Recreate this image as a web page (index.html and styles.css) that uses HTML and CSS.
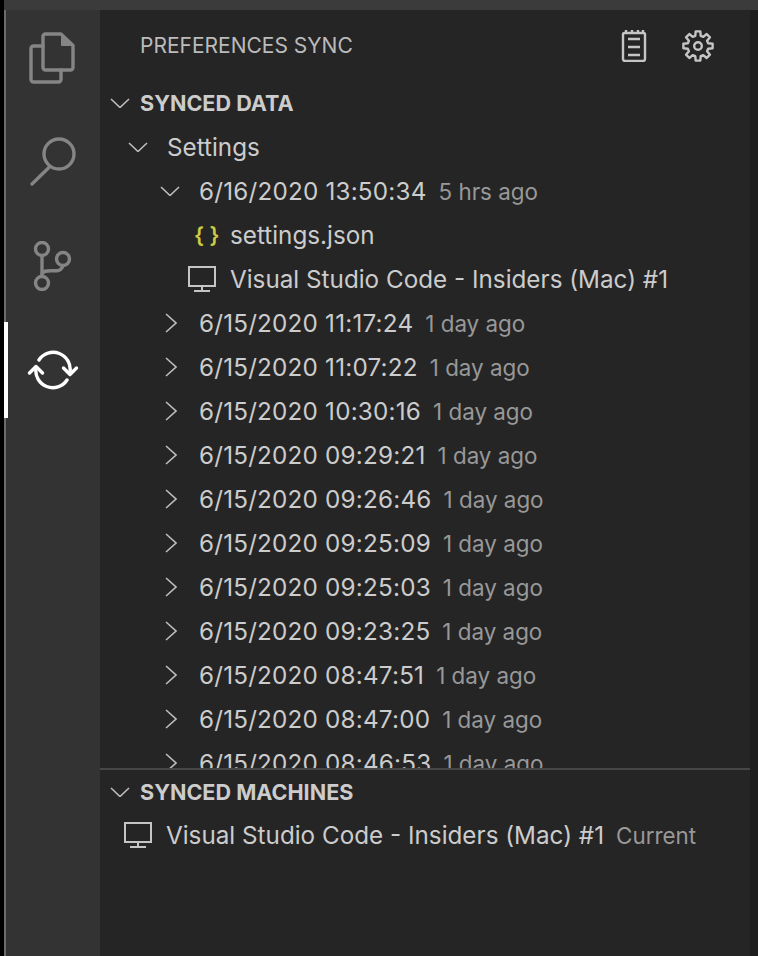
FILE: index.html
```html
<!DOCTYPE html>
<html lang="en">
<head>
    <meta charset="UTF-8">
    <meta name="viewport" content="width=device-width, initial-scale=1.0">
    <title>Preferences Sync</title>
    <link rel="stylesheet" href="styles.css">
</head>
<body>

<div class="title-bar"></div>

<div class="workbench">
    <nav class="activity-bar">
        <div class="activity-item">
            <svg class="activity-icon" viewBox="0 0 48 56" width="48" height="56">
                <path d="M14 16H4.500A2.500 2.500 0 0 0 2 18.500V49.500A2.500 2.500 0 0 0 4.500 52H29.500A2.500 2.500 0 0 0 32 49.500V40"/>
                <path d="M16.500 4H32L44 15.500V37.500A2.500 2.500 0 0 1 41.500 40H16.500A2.500 2.500 0 0 1 14 37.500V6.500A2.500 2.500 0 0 1 16.500 4Z"/>
                <path class="fold" d="M32.500 4.500V15.500H43.500Z"/>
            </svg>
        </div>
        <div class="activity-item">
            <svg class="activity-icon" viewBox="0 0 48 50" width="48" height="50">
                <circle cx="30" cy="17" r="15"/>
                <path d="M19.700 30.700L3 47"/>
            </svg>
        </div>
        <div class="activity-item">
            <svg class="activity-icon" viewBox="0 0 40 50" width="40" height="50">
                <circle cx="9" cy="8" r="6.500"/>
                <circle cx="9" cy="42" r="6.500"/>
                <circle cx="30" cy="18" r="6.500"/>
                <path d="M9 14.500V35.500"/>
                <path d="M9 33C10 30 13 29.700 18 29.700H24C27 29.700 29 27.500 30 24.500"/>
            </svg>
        </div>
        <div class="activity-item active">
            <svg class="activity-icon" viewBox="0 0 52 40" width="52" height="40">
                <path d="M12 10A17 17 0 0 1 43 22"/>
                <path d="M40 30A17 17 0 0 1 9 18"/>
                <path d="M36.500 18L43 24.500L49.500 18"/>
                <path d="M2.500 23L9 16.500L15.500 23"/>
            </svg>
        </div>
    </nav>

    <div class="sidebar">
        <header class="sidebar-title">
            <span class="sidebar-title-label">PREFERENCES SYNC</span>
            <div class="sidebar-actions">
                <svg class="action-icon" viewBox="0 0 26 32" width="26" height="32">
                    <path d="M3.500 3H22.500A1.500 1.500 0 0 1 24 4.500V29A2 2 0 0 1 22 31H4A2 2 0 0 1 2 29V4.500A1.500 1.500 0 0 1 3.500 3Z"/>
                    <path d="M5 0V3M11 0V3M17 0V3M22 0V3"/>
                    <path d="M7 9H19M7 17H19M7 25H19"/>
                </svg>
                <svg class="action-icon" viewBox="0 0 32 32" width="32" height="32">
                    <path d="M13.280 5.860L13.680 1.380H18.320L18.720 5.860L21.250 6.910L24.700 4.030L27.970 7.300L25.090 10.750L26.140 13.280L30.620 13.680V18.320L26.140 18.720L25.090 21.250L27.970 24.700L24.700 27.970L21.250 25.090L18.720 26.140L18.320 30.620H13.680L13.280 26.140L10.750 25.090L7.300 27.970L4.030 24.700L6.910 21.250L5.860 18.720L1.380 18.320V13.680L5.860 13.280L6.910 10.750L4.030 7.300L7.300 4.030L10.750 6.910Z"/>
                    <circle cx="16" cy="16" r="3.800"/>
                </svg>
            </div>
        </header>

        <section class="pane pane-data">
            <div class="pane-header">
                <svg class="chevron" viewBox="0 0 20 10" width="20" height="10"><path d="M1 1L10 9.500L19 1"/></svg>
                <span>SYNCED DATA</span>
            </div>
            <div class="tree">
                <div class="row depth-1">
                    <span class="twistie"><svg class="chevron" viewBox="0 0 20 10" width="20" height="10"><path d="M1 1L10 9.500L19 1"/></svg></span>
                    <span class="label">Settings</span>
                </div>
                <div class="row depth-2">
                    <span class="twistie"><svg class="chevron" viewBox="0 0 20 10" width="20" height="10"><path d="M1 1L10 9.500L19 1"/></svg></span>
                    <span class="label date">6/16/2020 13:50:34</span>
                    <span class="description">5 hrs ago</span>
                </div>
                <div class="row depth-3">
                    <span class="file-icon">{ }</span>
                    <span class="label">settings.json</span>
                </div>
                <div class="row depth-3">
                    <svg class="monitor" viewBox="0 0 28 26" width="28" height="26">
                        <path d="M1 1H27V20H1Z"/>
                        <path d="M14 20V25M6 25H22"/>
                    </svg>
                    <span class="label">Visual Studio Code - Insiders (Mac) #1</span>
                </div>
                <div class="row depth-2 closed">
                    <span class="twistie"><svg class="chevron" viewBox="0 0 12 20" width="12" height="20"><path d="M1 1L11 10L1 19"/></svg></span>
                    <span class="label date">6/15/2020 11:17:24</span>
                    <span class="description">1 day ago</span>
                </div>
                <div class="row depth-2 closed">
                    <span class="twistie"><svg class="chevron" viewBox="0 0 12 20" width="12" height="20"><path d="M1 1L11 10L1 19"/></svg></span>
                    <span class="label date">6/15/2020 11:07:22</span>
                    <span class="description">1 day ago</span>
                </div>
                <div class="row depth-2 closed">
                    <span class="twistie"><svg class="chevron" viewBox="0 0 12 20" width="12" height="20"><path d="M1 1L11 10L1 19"/></svg></span>
                    <span class="label date">6/15/2020 10:30:16</span>
                    <span class="description">1 day ago</span>
                </div>
                <div class="row depth-2 closed">
                    <span class="twistie"><svg class="chevron" viewBox="0 0 12 20" width="12" height="20"><path d="M1 1L11 10L1 19"/></svg></span>
                    <span class="label date">6/15/2020 09:29:21</span>
                    <span class="description">1 day ago</span>
                </div>
                <div class="row depth-2 closed">
                    <span class="twistie"><svg class="chevron" viewBox="0 0 12 20" width="12" height="20"><path d="M1 1L11 10L1 19"/></svg></span>
                    <span class="label date">6/15/2020 09:26:46</span>
                    <span class="description">1 day ago</span>
                </div>
                <div class="row depth-2 closed">
                    <span class="twistie"><svg class="chevron" viewBox="0 0 12 20" width="12" height="20"><path d="M1 1L11 10L1 19"/></svg></span>
                    <span class="label date">6/15/2020 09:25:09</span>
                    <span class="description">1 day ago</span>
                </div>
                <div class="row depth-2 closed">
                    <span class="twistie"><svg class="chevron" viewBox="0 0 12 20" width="12" height="20"><path d="M1 1L11 10L1 19"/></svg></span>
                    <span class="label date">6/15/2020 09:25:03</span>
                    <span class="description">1 day ago</span>
                </div>
                <div class="row depth-2 closed">
                    <span class="twistie"><svg class="chevron" viewBox="0 0 12 20" width="12" height="20"><path d="M1 1L11 10L1 19"/></svg></span>
                    <span class="label date">6/15/2020 09:23:25</span>
                    <span class="description">1 day ago</span>
                </div>
                <div class="row depth-2 closed">
                    <span class="twistie"><svg class="chevron" viewBox="0 0 12 20" width="12" height="20"><path d="M1 1L11 10L1 19"/></svg></span>
                    <span class="label date">6/15/2020 08:47:51</span>
                    <span class="description">1 day ago</span>
                </div>
                <div class="row depth-2 closed">
                    <span class="twistie"><svg class="chevron" viewBox="0 0 12 20" width="12" height="20"><path d="M1 1L11 10L1 19"/></svg></span>
                    <span class="label date">6/15/2020 08:47:00</span>
                    <span class="description">1 day ago</span>
                </div>
                <div class="row depth-2 closed">
                    <span class="twistie"><svg class="chevron" viewBox="0 0 12 20" width="12" height="20"><path d="M1 1L11 10L1 19"/></svg></span>
                    <span class="label date">6/15/2020 08:46:53</span>
                    <span class="description">1 day ago</span>
                </div>
            </div>
        </section>

        <section class="pane pane-machines">
            <div class="pane-header">
                <svg class="chevron" viewBox="0 0 20 10" width="20" height="10"><path d="M1 1L10 9.500L19 1"/></svg>
                <span>SYNCED MACHINES</span>
            </div>
            <div class="row machine-row">
                <svg class="monitor" viewBox="0 0 28 26" width="28" height="26">
                    <path d="M1 1H27V20H1Z"/>
                    <path d="M14 20V25M6 25H22"/>
                </svg>
                <span class="label">Visual Studio Code - Insiders (Mac) #1</span>
                <span class="description">Current</span>
            </div>
        </section>
    </div>

    <div class="scroll-gutter"></div>
</div>

</body>
</html>
```

FILE: styles.css
```css
body {
    font-family: Inter, "Liberation Sans", sans-serif;
    margin: 0;
    padding: 0 0 0 4px;
    background: #000000;
    color: #cccccc;
    height: 956px;
    box-sizing: border-box;
    overflow: hidden;
    display: flex;
    flex-direction: column;
}

.title-bar {
    height: 10px;
    background-color: #3b3b3b;
    flex-shrink: 0;
}

.workbench {
    flex: 1;
    display: flex;
    min-height: 0;
}

/* activity bar */
.activity-bar {
    width: 94px;
    background-color: #333333;
    border-left: 2px solid #6b6b6b;
    flex-shrink: 0;
    display: flex;
    flex-direction: column;
    gap: 8px;
}

.activity-item {
    height: 96px;
    display: flex;
    align-items: center;
    justify-content: center;
    position: relative;
}

.activity-icon {
    fill: none;
    stroke: #858585;
    stroke-width: 3.4;
    stroke-linejoin: round;
    stroke-linecap: round;
}

.activity-icon .fold {
    fill: #858585;
    stroke-width: 1;
}

.activity-item.active .activity-icon {
    stroke: #ffffff;
}

.activity-item.active::before {
    content: "";
    position: absolute;
    left: -2px;
    top: 0;
    bottom: 0;
    width: 4px;
    background-color: #ffffff;
}

/* sidebar */
.sidebar {
    flex: 1;
    min-width: 0;
    display: flex;
    flex-direction: column;
    background-color: #252526;
}

.sidebar-title {
    height: 71px;
    display: flex;
    align-items: center;
    justify-content: space-between;
    padding: 0 36px 0 40px;
    flex-shrink: 0;
}

.sidebar-title-label {
    font-size: 21px;
    color: #bbbbbb;
}

.sidebar-actions {
    display: flex;
    align-items: center;
    gap: 35px;
}

.action-icon {
    fill: none;
    stroke: #c5c5c5;
    stroke-width: 2.4;
    stroke-linejoin: round;
}

.pane-data {
    height: 687px;
    overflow: hidden;
    flex-shrink: 0;
}

.pane-machines {
    flex: 1;
    border-top: 2px solid #474747;
}

.pane-header {
    height: 43px;
    padding: 0 0 1px 10px;
    display: flex;
    align-items: center;
    font-size: 21.6px;
    font-weight: 700;
    color: #cccccc;
}

.pane-machines .pane-header {
    height: 42px;
    padding-top: 1px;
    padding-bottom: 0;
}

.pane-header .chevron {
    margin-right: 10px;
}

.chevron {
    fill: none;
    stroke: #bdbdbd;
    stroke-width: 1.6;
    flex-shrink: 0;
}

.row {
    height: 44px;
    display: flex;
    align-items: center;
    font-size: 24.25px;
    white-space: nowrap;
}

.twistie {
    width: 39px;
    display: flex;
    align-items: center;
    flex-shrink: 0;
}

.closed .twistie {
    padding-left: 5px;
    width: 34px;
}

.depth-1 {
    padding-left: 28px;
}

.depth-2 {
    padding-left: 60px;
}

.depth-3 {
    padding-left: 88px;
}

.label {
    color: #cccccc;
}

.date {
    letter-spacing: 0.2px;
}

.description {
    margin-left: 12px;
    font-size: 22.4px;
    color: #989898;
}

.file-icon {
    width: 42px;
    padding-left: 6px;
    box-sizing: border-box;
    font-size: 22px;
    font-weight: 600;
    color: #cbcb41;
    flex-shrink: 0;
}

.monitor {
    fill: none;
    stroke: #c5c5c5;
    stroke-width: 2;
    margin-right: 14px;
    flex-shrink: 0;
}

.machine-row {
    padding-left: 24px;
}

.scroll-gutter {
    width: 8px;
    background-color: #1e1e1e;
    flex-shrink: 0;
}
```
